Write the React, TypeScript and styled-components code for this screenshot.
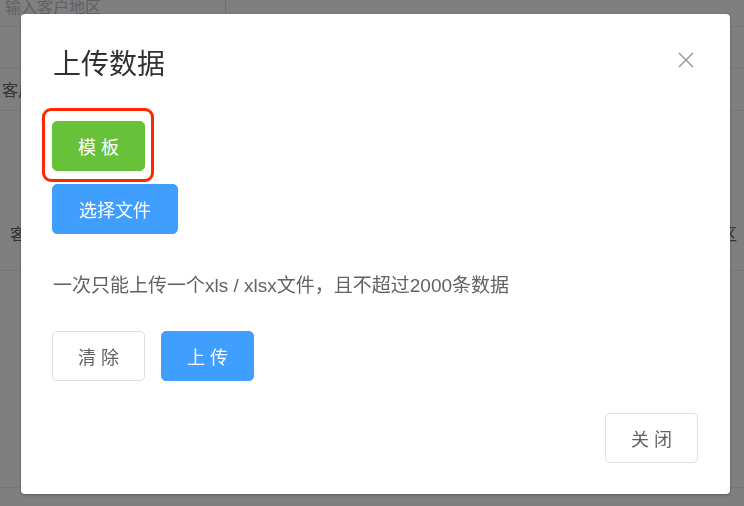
import React from 'react';
import styled, { createGlobalStyle, css } from 'styled-components';

const GlobalStyle = createGlobalStyle`
  html, body {
    margin: 0;
    padding: 0;
  }
  body {
    font-family: "Liberation Sans", "Noto Sans CJK SC", sans-serif;
    background: #fff;
  }
`;

/* ---------- page behind the dialog ---------- */

const Page = styled.div`
  height: 506px;
  overflow: hidden;
  background: #fff;
  display: flex;
  flex-direction: column;
  margin-top: -14px;
`;

const Row = styled.div<{ $h: number; $line?: boolean }>`
  height: ${(p) => p.$h}px;
  flex-shrink: 0;
  display: flex;
  align-items: center;
  justify-content: space-between;
  box-sizing: border-box;
  ${(p) =>
    p.$line &&
    css`
      border-bottom: 1px solid #ebeef5;
    `}
`;

const FakeInput = styled.div`
  width: 226px;
  height: 100%;
  box-sizing: border-box;
  border-right: 1px solid #dcdfe6;
  display: flex;
  align-items: center;
  padding: 0 5px;
  font-size: 16px;
  color: #c0c4cc;
`;

const Cell = styled.span<{ $pad?: number }>`
  font-size: 16px;
  color: #6a6a6a;
  padding: 0 ${(p) => p.$pad ?? 2}px;
`;

/* ---------- dialog ---------- */

const Mask = styled.div`
  position: fixed;
  inset: 0;
  background: rgba(0, 0, 0, 0.5);
  overflow: hidden;
`;

const Dialog = styled.div`
  position: relative;
  margin: 14px 0 0 21px;
  width: 709px;
  height: 480px;
  box-sizing: border-box;
  background: #fff;
  border-radius: 4px;
  box-shadow: 0 1px 3px rgba(0, 0, 0, 0.3);
  display: flex;
  flex-direction: column;
`;

const Header = styled.div`
  padding: 37px 32px 0 32px;
`;

const Title = styled.div`
  font-size: 28px;
  line-height: 28px;
  color: #303133;
`;

const CloseIcon = styled.button`
  position: absolute;
  top: 38px;
  right: 36px;
  width: 16px;
  height: 16px;
  padding: 0;
  border: none;
  background: none;
  display: flex;
`;

const Body = styled.div`
  padding: 0 32px 0 31px;
  display: flex;
  flex-direction: column;
  align-items: flex-start;
`;

const Highlight = styled.span`
  position: relative;
  display: inline-flex;
  margin-top: 42px;

  &::after {
    content: '';
    position: absolute;
    top: -13px;
    left: -10px;
    right: -9px;
    bottom: -11px;
    border: 3px solid #ff2600;
    border-radius: 9px;
  }
`;

type Kind = 'success' | 'primary' | 'default';

const kindStyles = {
  success: css`
    background: #67c23a;
    border-color: #67c23a;
    color: #fff;
  `,
  primary: css`
    background: #409eff;
    border-color: #409eff;
    color: #fff;
  `,
  default: css`
    background: #fff;
    border-color: #dcdfe6;
    color: #606266;
  `,
};

const Button = styled.button<{ $kind: Kind }>`
  height: 50px;
  padding: 0 25px;
  box-sizing: border-box;
  border: 1px solid;
  border-radius: 5px;
  font-family: "Liberation Sans", "Noto Sans CJK SC", sans-serif;
  font-size: 18px;
  white-space: pre;
  cursor: pointer;
  ${(p) => kindStyles[p.$kind]}
`;

const FileButton = styled(Button)`
  margin-top: 13px;
  padding: 0 26px;
`;

const Tip = styled.p`
  margin: 38px 0 0 1px;
  font-size: 19px;
  line-height: 27px;
  color: #606266;
`;

const ActionRow = styled.div`
  margin-top: 32px;
  display: flex;
  gap: 16px;
`;

const Footer = styled.div`
  margin-top: auto;
  padding: 0 32px 31px;
  display: flex;
  justify-content: flex-end;
`;

export default function App() {
  return (
    <>
      <GlobalStyle />
      <Page>
        <Row $h={41} $line>
          <FakeInput>输入客户地区</FakeInput>
        </Row>
        <Row $h={41} $line />
        <Row $h={43} $line>
          <Cell>客户名称</Cell>
        </Row>
        <Row $h={84} />
        <Row $h={76} $line>
          <Cell $pad={10}>客户名称</Cell>
          <Cell $pad={7}>客户地区</Cell>
        </Row>
        <Row $h={217} $line />
      </Page>
      <Mask>
        <Dialog>
          <Header>
            <Title>上传数据</Title>
          </Header>
          <CloseIcon aria-label="关闭">
            <svg width="16" height="16" viewBox="0 0 16 16">
              <path d="M1 1 L15 15 M15 1 L1 15" stroke="#909399" strokeWidth="1.4" fill="none" />
            </svg>
          </CloseIcon>
          <Body>
            <Highlight>
              <Button $kind="success">模 板</Button>
            </Highlight>
            <FileButton $kind="primary">选择文件</FileButton>
            <Tip>一次只能上传一个xls / xlsx文件，且不超过2000条数据</Tip>
            <ActionRow>
              <Button $kind="default">清 除</Button>
              <Button $kind="primary">上 传</Button>
            </ActionRow>
          </Body>
          <Footer>
            <Button $kind="default">关 闭</Button>
          </Footer>
        </Dialog>
      </Mask>
    </>
  );
}
